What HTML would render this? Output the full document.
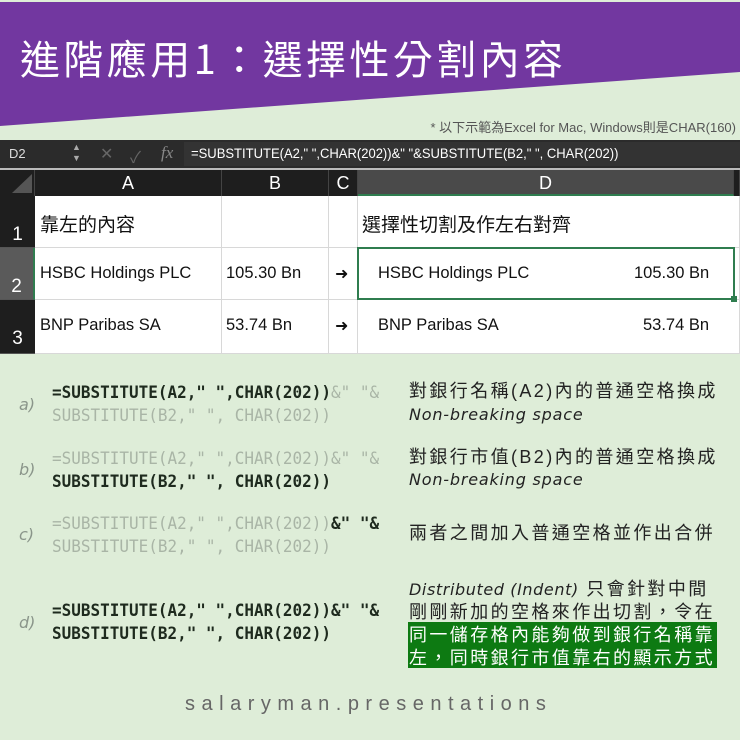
<!DOCTYPE html>
<html><head><meta charset="utf-8"><style>
*{margin:0;padding:0;box-sizing:border-box}
body{width:740px;height:740px;overflow:hidden;background:#deedd8;position:relative;font-family:"Liberation Sans","Noto Sans CJK TC",sans-serif}
.abs{position:absolute;white-space:nowrap}
.cell{position:absolute;background:#fff;border-right:1px solid #d8d8d8;border-bottom:1px solid #d8d8d8}
.hd{position:absolute;background:#1e1e1e;color:#fff;font-size:18px;text-align:center;line-height:26px;border-right:1px solid #444}
.rn{position:absolute;left:0;width:35px;background:#1e1e1e;color:#fff;font-size:19px;text-align:center;border-bottom:1px solid #555}
.t{font-size:16px;color:#111;position:absolute}
.code{font-family:"DejaVu Sans Mono",monospace;font-size:17px;font-weight:bold;color:#1e2a1e;transform:scaleX(0.94);transform-origin:left}
.g{color:#a9b5a6;font-weight:normal}
.lab{font-family:"DejaVu Sans",sans-serif;font-style:italic;color:#8a958a;font-size:16px}
.cn{font-size:18px;color:#222;letter-spacing:2.4px}
.it{font-family:"DejaVu Sans",sans-serif;font-style:italic;font-size:16px;color:#222;letter-spacing:0.8px}
</style></head><body>
<svg class="abs" style="left:0;top:0" width="740" height="130"><polygon points="0,2 740,2 740,72 0,126" fill="#7237a0"/></svg>
<div class="abs" style="left:20px;top:30px;color:#fff;font-size:40px;letter-spacing:3.4px;font-family:'Noto Sans CJK TC',sans-serif;line-height:54px">進階應用1：選擇性分割內容</div>
<div class="abs" style="right:4px;top:117px;font-size:13px;color:#555">* 以下示範為Excel for Mac, Windows則是CHAR(160)</div>

<div class="abs" style="left:0;top:140px;width:740px;height:28px;background:#2b2b2b"></div>
<div class="abs" style="left:184px;top:142px;width:556px;height:24px;background:#333"></div>
<div class="abs" style="left:9px;top:146px;color:#ddd;font-size:13px">D2</div>
<div class="abs" style="left:72px;top:142px;color:#aaa;font-size:9px;line-height:11px">▲<br>▼</div>
<div class="abs" style="left:100px;top:144px;color:#666;font-size:16px">✕</div>
<div class="abs" style="left:130px;top:144px;color:#666;font-size:16px">✓</div>
<div class="abs" style="left:161px;top:143px;color:#888;font-size:17px;font-style:italic;font-family:'Liberation Serif',serif">fx</div>
<div class="abs" style="left:191px;top:145px;color:#fff;font-size:14px;transform:scaleX(0.93);transform-origin:left">=SUBSTITUTE(A2," ",CHAR(202))&amp;" "&amp;SUBSTITUTE(B2," ", CHAR(202))</div>
<div class="abs" style="left:0;top:168px;width:740px;height:2px;background:#bbb"></div>

<div class="hd" style="left:0;top:170px;width:35px;height:26px;background:#1e1e1e"><svg width="35" height="26"><polygon points="32,4 32,23 12,23" fill="#555"/></svg></div>
<div class="hd" style="left:35px;top:170px;width:187px;height:26px">A</div>
<div class="hd" style="left:222px;top:170px;width:107px;height:26px">B</div>
<div class="hd" style="left:329px;top:170px;width:29px;height:26px">C</div>
<div class="hd" style="left:358px;top:170px;width:376px;height:26px;background:#4a4a4a;border-bottom:2px solid #2f7d4f">D</div>
<div class="hd" style="left:734px;top:170px;width:6px;height:26px"></div>

<div class="rn" style="top:196px;height:52px;padding-top:28px">1</div>
<div class="rn" style="top:248px;height:52px;padding-top:28px;background:#5a5a5a;border-right:2px solid #2f7d4f">2</div>
<div class="rn" style="top:300px;height:54px;padding-top:28px">3</div>

<div class="cell" style="left:35px;top:196px;width:187px;height:52px"></div>
<div class="cell" style="left:222px;top:196px;width:107px;height:52px"></div>
<div class="cell" style="left:329px;top:196px;width:29px;height:52px"></div>
<div class="cell" style="left:358px;top:196px;width:382px;height:52px"></div>
<div class="cell" style="left:35px;top:248px;width:187px;height:52px"></div>
<div class="cell" style="left:222px;top:248px;width:107px;height:52px"></div>
<div class="cell" style="left:329px;top:248px;width:29px;height:52px"></div>
<div class="cell" style="left:358px;top:248px;width:382px;height:52px"></div>
<div class="cell" style="left:35px;top:300px;width:187px;height:54px"></div>
<div class="cell" style="left:222px;top:300px;width:107px;height:54px"></div>
<div class="cell" style="left:329px;top:300px;width:29px;height:54px"></div>
<div class="cell" style="left:358px;top:300px;width:382px;height:54px"></div>
<div class="abs" style="left:357px;top:247px;width:378px;height:53px;border:2px solid #2f7d4f"></div>
<div class="abs" style="left:731px;top:296px;width:6px;height:6px;background:#2f7d4f"></div>

<div class="t" style="left:40px;top:210px;font-size:19px">靠左的內容</div>
<div class="t" style="left:362px;top:210px;font-size:19px">選擇性切割及作左右對齊</div>
<div class="t" style="left:40px;top:264px;font-size:16.5px">HSBC Holdings PLC</div>
<div class="t" style="left:226px;top:264px;font-size:16.5px">105.30 Bn</div>
<div class="t" style="left:335px;top:264px">➜</div>
<div class="t" style="left:378px;top:264px;font-size:16.5px">HSBC Holdings PLC</div>
<div class="t" style="left:634px;top:264px;font-size:16.5px">105.30 Bn</div>
<div class="t" style="left:40px;top:316px;font-size:16.5px">BNP Paribas SA</div>
<div class="t" style="left:226px;top:316px;font-size:16.5px">53.74 Bn</div>
<div class="t" style="left:335px;top:316px">➜</div>
<div class="t" style="left:378px;top:316px;font-size:16.5px">BNP Paribas SA</div>
<div class="t" style="left:643px;top:316px;font-size:16.5px">53.74 Bn</div>

<div class="abs lab" style="left:19px;top:395px">a)</div>
<div class="abs code" style="left:52px;top:383px">=SUBSTITUTE(A2," ",CHAR(202))<span class="g">&amp;" "&amp;</span></div>
<div class="abs code g" style="left:52px;top:406px">SUBSTITUTE(B2," ", CHAR(202))</div>
<div class="abs lab" style="left:19px;top:460px">b)</div>
<div class="abs code g" style="left:52px;top:449px">=SUBSTITUTE(A2," ",CHAR(202))&amp;" "&amp;</div>
<div class="abs code" style="left:52px;top:472px">SUBSTITUTE(B2," ", CHAR(202))</div>
<div class="abs lab" style="left:19px;top:525px">c)</div>
<div class="abs code" style="left:52px;top:514px"><span class="g">=SUBSTITUTE(A2," ",CHAR(202))</span>&amp;" "&amp;</div>
<div class="abs code g" style="left:52px;top:537px">SUBSTITUTE(B2," ", CHAR(202))</div>
<div class="abs lab" style="left:19px;top:613px">d)</div>
<div class="abs code" style="left:52px;top:601px">=SUBSTITUTE(A2," ",CHAR(202))&amp;" "&amp;</div>
<div class="abs code" style="left:52px;top:624px">SUBSTITUTE(B2," ", CHAR(202))</div>

<div class="abs cn" style="left:409px;top:377px">對銀行名稱(A2)內的普通空格換成</div>
<div class="abs it" style="left:409px;top:405px">Non-breaking space</div>
<div class="abs cn" style="left:409px;top:443px">對銀行市值(B2)內的普通空格換成</div>
<div class="abs it" style="left:409px;top:470px">Non-breaking space</div>
<div class="abs cn" style="left:409px;top:519px">兩者之間加入普通空格並作出合併</div>
<div class="abs cn" style="left:409px;top:575px"><span class="it" style="letter-spacing:0.6px">Distributed (Indent)</span> 只會針對中間</div>
<div class="abs cn" style="left:409px;top:598px">剛剛新加的空格來作出切割，令在</div>
<div class="abs" style="left:408px;top:622px;width:309px;height:46px;background:#0d7a12"></div>
<div class="abs cn" style="left:409px;top:621px;color:#fff">同一儲存格內能夠做到銀行名稱靠</div>
<div class="abs cn" style="left:409px;top:644px;color:#fff">左，同時銀行市值靠右的顯示方式</div>

<div class="abs" style="left:185px;top:693px;font-size:20px;letter-spacing:6.5px;color:#666">salaryman.presentations</div>
</body></html>
